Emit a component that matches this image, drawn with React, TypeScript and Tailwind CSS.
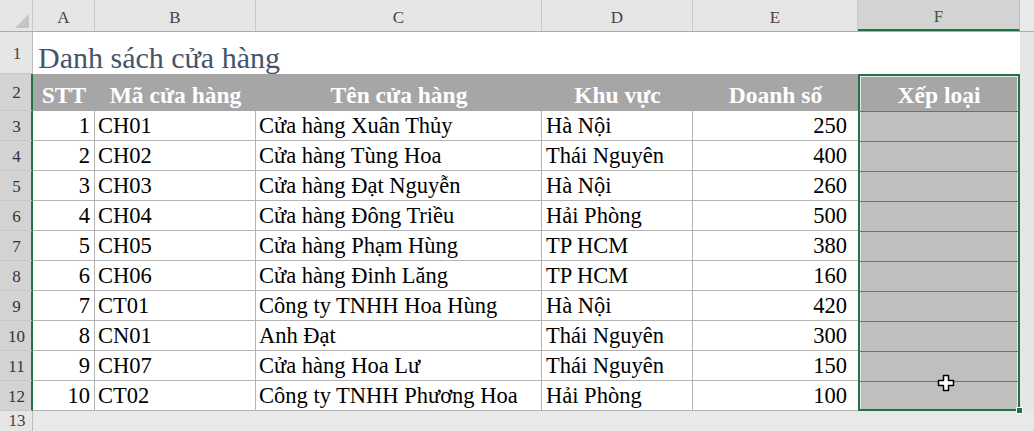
import React from "react";

const COLS = [62, 161, 286, 151, 165, 162];
const rows = [
  [1, "CH01", "Cửa hàng Xuân Thủy", "Hà Nội", 250],
  [2, "CH02", "Cửa hàng Tùng Hoa", "Thái Nguyên", 400],
  [3, "CH03", "Cửa hàng Đạt Nguyễn", "Hà Nội", 260],
  [4, "CH04", "Cửa hàng Đông Triều", "Hải Phòng", 500],
  [5, "CH05", "Cửa hàng Phạm Hùng", "TP HCM", 380],
  [6, "CH06", "Cửa hàng Đinh Lăng", "TP HCM", 160],
  [7, "CT01", "Công ty TNHH Hoa Hùng", "Hà Nội", 420],
  [8, "CN01", "Anh Đạt", "Thái Nguyên", 300],
  [9, "CH07", "Cửa hàng Hoa Lư", "Thái Nguyên", 150],
  [10, "CT02", "Công ty TNHH Phương Hoa", "Hải Phòng", 100],
] as const;

const serif = "font-[family-name:Liberation_Serif,Times_New_Roman,serif]";

function RowLabel({ n, sel, h }: { n: number; sel: boolean; h: string }) {
  return (
    <div
      className={`${h} w-[33px] shrink-0 flex items-center justify-center text-[17px] ${
        sel
          ? "bg-[#d3d3d3] border-r-2 border-r-[#217346] text-[#333]"
          : "bg-[#e6e6e6] border-r border-r-[#bdbdbd] text-[#444]"
      } border-b border-b-[#c8c8c8]`}
    >
      <span className="pl-[2px] pt-[2px]">{n}</span>
    </div>
  );
}

export default function App() {
  return (
    <div className={`relative w-[1034px] h-[431px] overflow-hidden bg-[#e6e6e6] ${serif}`}>
      {/* Column headers */}
      <div className="flex h-[32px] border-b border-b-[#ababab]">
        <div className="relative w-[33px] shrink-0 bg-[#e6e6e6] border-r border-r-[#c8c8c8]">
          <svg className="absolute right-[3px] bottom-[3px]" width="14" height="14" viewBox="0 0 14 14">
            <polygon points="14,0 14,14 0,14" fill="#c4c4c4" />
          </svg>
        </div>
        {["A", "B", "C", "D", "E"].map((l, i) => (
          <div
            key={l}
            style={{ width: COLS[i] }}
            className="shrink-0 flex items-center justify-center pt-[4px] text-[17px] text-[#444] bg-[#e6e6e6] border-r border-r-[#c8c8c8]"
          >
            {l}
          </div>
        ))}
        <div className="w-[162px] shrink-0 flex items-center justify-center pt-[4px] text-[17px] text-[#2f5f45] bg-[#d3d3d3] border-b-2 border-b-[#217346] border-r border-r-[#bdbdbd]">
          F
        </div>
        <div className="flex-1 bg-[#e9e9e9]" />
      </div>

      {/* Row 1 */}
      <div className="flex h-[42px]">
        <RowLabel n={1} sel={false} h="h-[42px]" />
        <div className="w-[987px] shrink-0 bg-white flex items-end pl-[5px]">
          <span className="text-[30px] leading-[32px] text-[#44546a]">Danh sách cửa hàng</span>
        </div>
        <div className="flex-1 bg-[#e6e6e6]" />
      </div>

      {/* Row 2 header */}
      <div className="flex h-[37px]">
        <RowLabel n={2} sel={true} h="h-[37px]" />
        {["STT", "Mã cửa hàng", "Tên cửa hàng", "Khu vực", "Doanh số"].map((t, i) => (
          <div
            key={t}
            style={{ width: COLS[i] }}
            className="shrink-0 bg-[#a6a6a6] flex items-center justify-center pt-[7px] text-[23.5px] font-bold text-white whitespace-nowrap"
          >
            {t}
          </div>
        ))}
        <div className="w-[162px] shrink-0 bg-[#a6a6a6] border-t-2 border-x-2 border-[#217346] shadow-[inset_1px_1px_0_#e8e8e8,inset_-1px_0_0_#e8e8e8] flex items-center justify-center pt-[5px] text-[23.5px] font-bold text-white">
          Xếp loại
        </div>
        <div className="flex-1 bg-[#e6e6e6]" />
      </div>

      {/* Data rows */}
      {rows.map((r, idx) => {
        const last = idx === rows.length - 1;
        return (
          <div key={idx} className="flex h-[30px]">
            <RowLabel n={idx + 3} sel={true} h="h-[30px]" />
            <div className="w-[62px] shrink-0 bg-white border-r border-b border-[#b4b4b4] flex items-center justify-end pr-[4px] pt-[1px] text-[22.5px] text-black">
              {r[0]}
            </div>
            <div className="w-[161px] shrink-0 bg-white border-r border-b border-[#b4b4b4] flex items-center pl-[3px] pt-[1px] text-[22.5px] text-black">
              {r[1]}
            </div>
            <div className="w-[286px] shrink-0 bg-white border-r border-b border-[#b4b4b4] flex items-center pl-[3px] pt-[1px] text-[22.5px] text-black whitespace-nowrap">
              {r[2]}
            </div>
            <div className="w-[151px] shrink-0 bg-white border-r border-b border-[#b4b4b4] flex items-center pl-[4px] pt-[1px] text-[22.5px] text-black whitespace-nowrap">
              {r[3]}
            </div>
            <div className="w-[165px] shrink-0 bg-white border-b border-[#b4b4b4] flex items-center justify-end pr-[11px] pt-[1px] text-[22.5px] text-black">
              {r[4]}
            </div>
            <div
              className={`w-[162px] shrink-0 bg-[#bfbfbf] border-x-2 border-x-[#217346] border-t border-t-[#6f6f6f] shadow-[inset_1px_0_0_#e8e8e8,inset_-1px_0_0_#e8e8e8] ${
                last ? "border-b-2 border-b-[#217346]" : ""
              }`}
            />
            <div className="flex-1 bg-[#e6e6e6]" />
          </div>
        );
      })}

      {/* Row 13 */}
      <div className="flex h-[20px]">
        <div className="w-[33px] shrink-0 h-[20px] bg-[#e6e6e6] border-r border-r-[#bdbdbd] flex items-center justify-center text-[17px] leading-[20px] text-[#444]">
          <span className="pl-[2px]">13</span>
        </div>
        <div className="flex-1 bg-[#e9e9e9]" />
      </div>

      {/* fill handle */}
      <div className="absolute left-[1016px] top-[407px] w-[7px] h-[7px] bg-[#217346] border border-white" />

      {/* cursor */}
      <svg className="absolute left-[937px] top-[374px]" width="18" height="18" viewBox="0 0 18 18">
        <path
          d="M6.5 1.5h5v5h5v5h-5v5h-5v-5h-5v-5h5z"
          fill="#fff"
          stroke="#000"
          strokeWidth="1.5"
          strokeLinejoin="round"
        />
      </svg>
    </div>
  );
}
